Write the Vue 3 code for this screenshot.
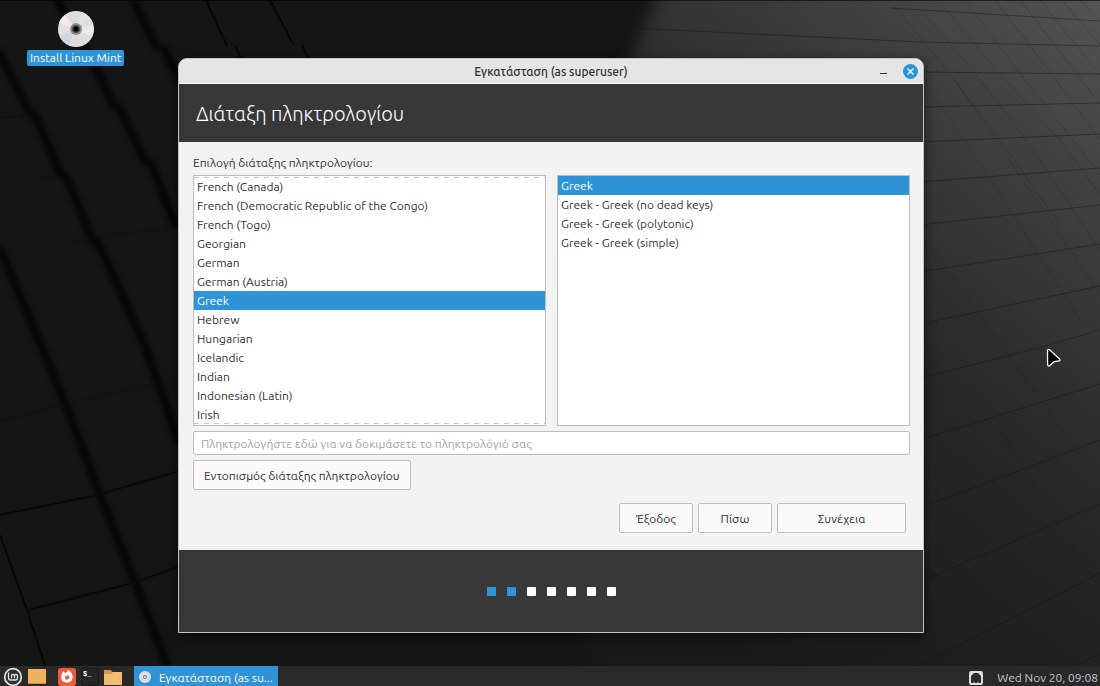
<script setup>
import { ref } from 'vue'

const layouts = [
  'French (Canada)',
  'French (Democratic Republic of the Congo)',
  'French (Togo)',
  'Georgian',
  'German',
  'German (Austria)',
  'Greek',
  'Hebrew',
  'Hungarian',
  'Icelandic',
  'Indian',
  'Indonesian (Latin)',
  'Irish',
]
const variants = [
  'Greek',
  'Greek - Greek (no dead keys)',
  'Greek - Greek (polytonic)',
  'Greek - Greek (simple)',
]
const layout = ref('Greek')
const variant = ref('Greek')
const sample = ref('')
const totalSteps = 7
const currentStep = 2

const darkBands = [
  'M57 0 97 70 115 108', 'M118 105 147 165', 'M150 161 176 227', 'M133 0 158 50', 'M163 47 182 84',
  'M-2 50 32 117', 'M35 114 62 178', 'M65 174 94 244', 'M96 238 143 341 180 445',
  'M0 248 40 343 68 410 97 487 133 577 168 668',
]
const thinBands = ['M0 535 27 610 46 668', 'M206 0 227 46', 'M235 45 243 64', 'M270 0 293 44', 'M302 45 310 62']
const seams = [
  'M0 422 68 403 180 378', 'M0 117 34 116', 'M34 178 65 178', 'M65 244 95 237 180 227',
]
const strongSeams = ['M0 515 97 495 180 471', 'M28 610 133 583 180 566']
const floorLines = [
  'M630 28 920 42 1100 46', 'M890 8 1100 21', 'M920 72 1100 74', 'M920 107 1100 103',
  'M920 142 1100 134', 'M920 182 1100 168', 'M920 225 1100 205', 'M920 272 1100 244',
  'M920 324 1100 286', 'M920 378 1042 347 1100 330', 'M920 440 1100 384', 'M920 508 1100 440',
  'M920 582 1100 504', 'M915 668 1100 573', 'M1070 668 1100 654', 'M780 645 804 632',
]
const diagonals = [
  'M890 0 948 72 1000 140 1060 225', 'M921 10 974 72 1026 140 1100 250', 'M942 5 998 72 1060 140 1100 195',
  'M965 0 1025 80 1073 140 1100 175', 'M995 0 1050 72 1100 140', 'M1020 0 1100 104',
  'M1040 0 1100 75', 'M1062 0 1100 45', 'M1080 0 1100 22', 'M955 80 1040 205 1100 295',
  'M930 90 1010 210 1080 320', 'M940 260 1000 343 1080 455', 'M1000 430 1040 495 1100 590',
]
</script>

<template>
  <div class="screen">
    <main class="desktop">
      <svg class="wallpaper" viewBox="0 0 1100 666" preserveAspectRatio="none" aria-hidden="true">
        <defs>
          <linearGradient id="floor" x1="1" y1="0" x2="0.35" y2="0.9">
            <stop offset="0" stop-color="#585858" />
            <stop offset="0.25" stop-color="#404040" />
            <stop offset="0.55" stop-color="#282828" />
            <stop offset="1" stop-color="#181818" />
          </linearGradient>
          <filter id="soft" x="-20%" y="-20%" width="140%" height="140%" color-interpolation-filters="sRGB"><feGaussianBlur stdDeviation="2" /></filter>
          <filter id="wide" x="-20%" y="-20%" width="140%" height="140%" color-interpolation-filters="sRGB"><feGaussianBlur stdDeviation="8" /></filter>
        </defs>
        <rect width="1100" height="666" fill="#151515" />
        <path d="M664 -20 632 58 490 340 600 700H1130V-20Z" fill="url(#floor)" filter="url(#wide)" />
        <g fill="none">
          <g stroke="#060606" stroke-width="8" filter="url(#soft)">
            <path v-for="d in darkBands" :key="d" :d="d" />
          </g>
          <path v-for="d in thinBands" :key="d" :d="d" stroke="#070707" stroke-width="2" />
          <path v-for="d in seams" :key="d" :d="d" stroke="#101010" />
          <path v-for="d in strongSeams" :key="d" :d="d" stroke="#0a0a0a" stroke-width="2" />
          <path v-for="d in floorLines" :key="d" :d="d" stroke="#101010" stroke-opacity="0.38" stroke-width="1" />
          <path v-for="d in diagonals" :key="d" :d="d" stroke="#101010" stroke-opacity="0.17" stroke-width="1" />
        </g>
        <rect width="1100" height="1" fill="#000" fill-opacity="0.6" />
      </svg>

      <button class="launcher" type="button">
        <svg width="38" height="38" viewBox="0 0 38 38" aria-hidden="true">
          <circle cx="19" cy="19" r="18" fill="#dedcdd" />
          <path d="M19 19 2 13A18 18 0 0 1 8 5Z" fill="#f0eeef" />
          <path d="M19 19 25 2A18 18 0 0 1 33 8Z" fill="#e3e5d7" />
          <path d="M19 19 36 15A18 18 0 0 1 35 27Z" fill="#eeeaec" />
          <path d="M19 19 3 27A18 18 0 0 0 11 35Z" fill="#cfd6df" />
          <path d="M19 19 2 17A18 18 0 0 0 2 24Z" fill="#eadcdc" />
          <circle cx="19" cy="19" r="6" fill="#8d8d8d" />
          <circle cx="19" cy="19" r="4" fill="#4b4b4b" />
          <circle cx="19" cy="19" r="2.6" fill="#050505" />
        </svg>
        <span class="launcher-name">Install Linux Mint</span>
      </button>

      <section class="window" aria-labelledby="window-title">
        <header class="titlebar">
          <h1 id="window-title" class="window-title">Εγκατάσταση (as superuser)</h1>
          <div class="window-controls">
            <button class="control" type="button" aria-label="Minimize">
              <svg width="15" height="15" viewBox="0 0 15 15"><path d="M4 9.5h7" stroke="#333" /></svg>
            </button>
            <button class="control close" type="button" aria-label="Close">
              <svg width="15" height="15" viewBox="0 0 15 15"><path d="m4.5 4.5 6 6m0-6-6 6" stroke="#fff" stroke-width="1.2" /></svg>
            </button>
          </div>
        </header>
        <h2 class="page-title">Διάταξη πληκτρολογίου</h2>

        <form class="page" @submit.prevent>
          <p id="choose" class="prompt">Επιλογή διάταξης πληκτρολογίου:</p>
          <div class="lists">
            <ul class="list scrolled" role="listbox" aria-labelledby="choose">
              <li
                v-for="item in layouts"
                :key="item"
                class="row"
                role="option"
                :aria-selected="item === layout"
                :class="{ selected: item === layout }"
                @click="layout = item"
              >{{ item }}</li>
            </ul>
            <ul class="list" role="listbox" aria-labelledby="choose">
              <li
                v-for="item in variants"
                :key="item"
                class="row"
                role="option"
                :aria-selected="item === variant"
                :class="{ selected: item === variant }"
                @click="variant = item"
              >{{ item }}</li>
            </ul>
          </div>
          <input
            v-model="sample"
            class="sample"
            type="text"
            aria-label="Πληκτρολογήστε εδώ για να δοκιμάσετε το πληκτρολόγιό σας"
            placeholder="Πληκτρολογήστε εδώ για να δοκιμάσετε το πληκτρολόγιό σας"
          />
          <button class="button detect" type="button">Εντοπισμός διάταξης πληκτρολογίου</button>
          <div class="actions">
            <button class="button" type="button">Έξοδος</button>
            <button class="button" type="button">Πίσω</button>
            <button class="button next" type="submit">Συνέχεια</button>
          </div>
        </form>

        <footer class="progress">
          <span v-for="n in totalSteps" :key="n" class="step" :class="{ done: n <= currentStep }"></span>
        </footer>
      </section>

      <svg class="pointer" width="18" height="22" viewBox="0 0 18 22" aria-hidden="true">
        <path d="M2.5 4Q2.5 1.5 4.8 3L14.6 12Q15.8 13.7 13.5 14L9.3 14.6 5 18.6Q3 20 2.6 17.4Z" fill="#000" stroke="#f4f4f4" stroke-width="1.3" stroke-linejoin="round" />
      </svg>
    </main>

    <nav class="taskbar" aria-label="Panel">
      <button class="task-icon menu" type="button" aria-label="Menu">
        <svg width="20" height="20" viewBox="0 0 20 20">
          <circle cx="10" cy="11" r="8.3" fill="#303030" stroke="#e4e4e4" stroke-width="1.7" />
          <path d="M5.5 6.5v5.3q0 2.2 2.2 2.2h4.6q2.2 0 2.2-2.2V9.9q0-1.5-1.5-1.5t-1.5 1.5v2.3m0-2.3q0-1.5-1.5-1.5T8.500 9.900v2.300" fill="none" stroke="#e4e4e4" stroke-width="1.3" />
        </svg>
      </button>
      <button class="task-icon show" type="button" aria-label="Show desktop">
        <svg width="18" height="20" viewBox="0 0 18 20">
          <path d="M0 3h18v15H0z" fill="#efb35f" /><path d="M0 17h18v1H0z" fill="#c98e42" />
        </svg>
      </button>
      <button class="task-icon browser" type="button" aria-label="Firefox">
        <svg width="18" height="20" viewBox="0 0 18 20">
          <rect y="2" width="18" height="18" rx="3" fill="#ee5d3b" />
          <path d="M5 5.2 7.2 7q3-1.2 2.2-3 4.9 1.7 5.2 6.4.1 6.1-5.8 6.2-5.2-.1-5.6-5.4Q3.3 8 5 5.2Z" fill="#fff" />
          <path d="M6.5 10.5q1.8.2 3-1.600 2.400.5 2.100 2.700-.5 2.100-2.700 2.100-2.200-.4-2.400-3.200Z" fill="#ee5d3b" />
        </svg>
      </button>
      <button class="task-icon terminal" type="button" aria-label="Terminal">
        <svg width="18" height="20" viewBox="0 0 18 20">
          <rect x="0.5" y="2.5" width="17" height="17" rx="2" fill="#242424" stroke="#181818" />
          <text x="2" y="10" class="prompt-glyph">$_</text>
        </svg>
      </button>
      <button class="task-icon files" type="button" aria-label="Files">
        <svg width="18" height="20" viewBox="0 0 18 20">
          <path d="M0 4h7l1.5 2H18v13H0z" fill="#d2954b" /><path d="M0 8h7l2-2h9v13H0z" fill="#f3bc70" />
        </svg>
      </button>
      <button class="task" type="button">
        <svg width="12" height="12" viewBox="0 0 12 12" aria-hidden="true">
          <circle cx="6" cy="6" r="6" fill="#d9e0e5" /><circle cx="6" cy="6" r="2" fill="#77828a" /><circle cx="6" cy="6" r="1" fill="#e5e5e5" />
        </svg>
        <span class="task-name">Εγκατάσταση (as su...</span>
      </button>
      <div class="tray">
        <svg width="14" height="14" viewBox="0 0 14 14" aria-hidden="true">
          <rect width="14" height="14" rx="2" fill="#dcdcdc" />
          <path d="M2 12V5l3-3h4l3 3v7h-2l-1-1-1 1H6l-1-1-1 1z" fill="#2b2b2b" />
        </svg>
        <time class="clock">Wed Nov 20, 09:08</time>
      </div>
    </nav>
  </div>
</template>

<style>
body {
  margin: 0;
  background: #151515;
}
</style>

<style scoped>
.screen {
  display: flex;
  flex-direction: column;
  min-height: 100vh;
  overflow: hidden;
  font-family: Ubuntu, Roboto, "Noto Sans", sans-serif;
  font-size: 12px;
  line-height: 19px;
  color: #303030;
}
button,
input {
  margin: 0;
  font: inherit;
  color: inherit;
  box-sizing: border-box;
}
.desktop {
  position: relative;
  flex: 1;
  display: flex;
  box-sizing: border-box;
  padding: 58px 176px 32px 178px;
  overflow: hidden;
}
.wallpaper {
  position: absolute;
  inset: 0;
  width: 100%;
  height: 100%;
}
.launcher {
  position: absolute;
  left: 27px;
  top: 10px;
  display: flex;
  flex-direction: column;
  align-items: center;
  gap: 2px;
  padding: 0;
  border: 0;
  background: none;
  color: #fff;
}
.launcher-name {
  padding: 0 3px;
  line-height: 16px;
  white-space: nowrap;
  background: #2f93d8;
  border-radius: 2px;
}
.window {
  position: relative;
  flex: 1;
  min-width: 0;
  align-self: flex-start;
  border: 1px solid #c4c4c4;
  border-radius: 9px 9px 0 0;
  background: #f3f3f3;
  box-shadow: 0 3px 12px rgba(0, 0, 0, 0.6);
}
.titlebar {
  display: grid;
  grid-template-columns: 1fr auto 1fr;
  align-items: center;
  height: 25px;
  padding: 0 5px;
  border-bottom: 1px solid #f6f6f6;
  border-radius: 8px 8px 0 0;
  background: #e5e5e5;
  box-sizing: border-box;
}
.window-title {
  grid-column: 2;
  margin: 0;
  font-size: 12px;
  font-weight: 500;
}
.window-controls {
  display: flex;
  justify-content: flex-end;
  gap: 12px;
}
.control {
  display: flex;
  padding: 0;
  border: 0;
  border-radius: 50%;
  background: none;
}
.close {
  background: #2f93d8;
}
.page-title {
  margin: 0;
  padding: 17px 17px 16px;
  font-size: 20px;
  font-weight: 300;
  line-height: 25px;
  color: #fff;
  background: #383838;
}
.page {
  padding: 11px 13px 17px 14px;
}
.prompt {
  margin: 0 0 3px;
}
.lists {
  display: grid;
  grid-template-columns: 1fr 1fr;
  gap: 11px;
}
.list {
  height: 249px;
  margin: 0;
  padding: 0;
  border: 1px solid #bdbdbd;
  background: #fff;
  list-style: none;
  overflow: hidden;
}
.scrolled {
  position: relative;
  height: 248px;
  padding-top: 1px;
}
.scrolled::before,
.scrolled::after {
  content: "";
  position: absolute;
  left: 0;
  right: 0;
  height: 1px;
  background: repeating-linear-gradient(90deg, #c4c4c4 0 5px, #fff 5px 10px);
}
.scrolled::before {
  top: 1px;
}
.scrolled::after {
  bottom: 1px;
}
.row {
  padding: 0 3px;
  white-space: nowrap;
}
.selected {
  background: #2f93d8;
  color: #fff;
}
.sample {
  display: block;
  width: 100%;
  height: 24px;
  margin-top: 5px;
  padding: 0 7px;
  border: 1px solid #bdbdbd;
  border-radius: 2px;
  background: #fff;
}
.sample::placeholder {
  color: #a3a3a3;
  opacity: 1;
}
.button {
  min-width: 74px;
  height: 30px;
  padding: 0 10px;
  border: 1px solid #bfbfbf;
  border-radius: 2px;
  background: #fafafa;
}
.detect {
  display: block;
  margin-top: 5px;
}
.actions {
  display: flex;
  justify-content: flex-end;
  gap: 5px;
  margin: 13px 4px 0 0;
}
.next {
  min-width: 129px;
}
.progress {
  display: flex;
  align-items: center;
  justify-content: center;
  gap: 11px;
  height: 82px;
  background: #383838;
}
.step {
  width: 9px;
  height: 9px;
  border-radius: 1px;
  background: #fff;
}
.done {
  background: #2f93d8;
}
.pointer {
  position: absolute;
  left: 1045px;
  top: 347px;
}
.taskbar {
  display: flex;
  align-items: stretch;
  height: 20px;
  padding: 0 2px 0 3px;
  background: #292929;
  overflow: hidden;
}
.task-icon {
  flex: none;
  display: flex;
  padding: 0;
  border: 0;
  background: none;
}
.show {
  margin-left: 5px;
}
.browser {
  margin-left: 12px;
}
.terminal,
.files {
  margin-left: 5px;
}
.prompt-glyph {
  font: bold 7px "Liberation Mono", monospace;
  fill: #fff;
}
.task {
  display: flex;
  align-items: center;
  gap: 8px;
  width: 144px;
  margin-left: 12px;
  padding: 2px 5px 0;
  border: 0;
  background: #2f93d8;
  color: #fff;
}
.task svg {
  flex: none;
}
.task-name {
  white-space: nowrap;
}
.tray {
  display: flex;
  align-items: center;
  gap: 14px;
  margin-left: auto;
  padding-top: 3px;
  color: #c8c8c8;
  white-space: nowrap;
}
</style>
